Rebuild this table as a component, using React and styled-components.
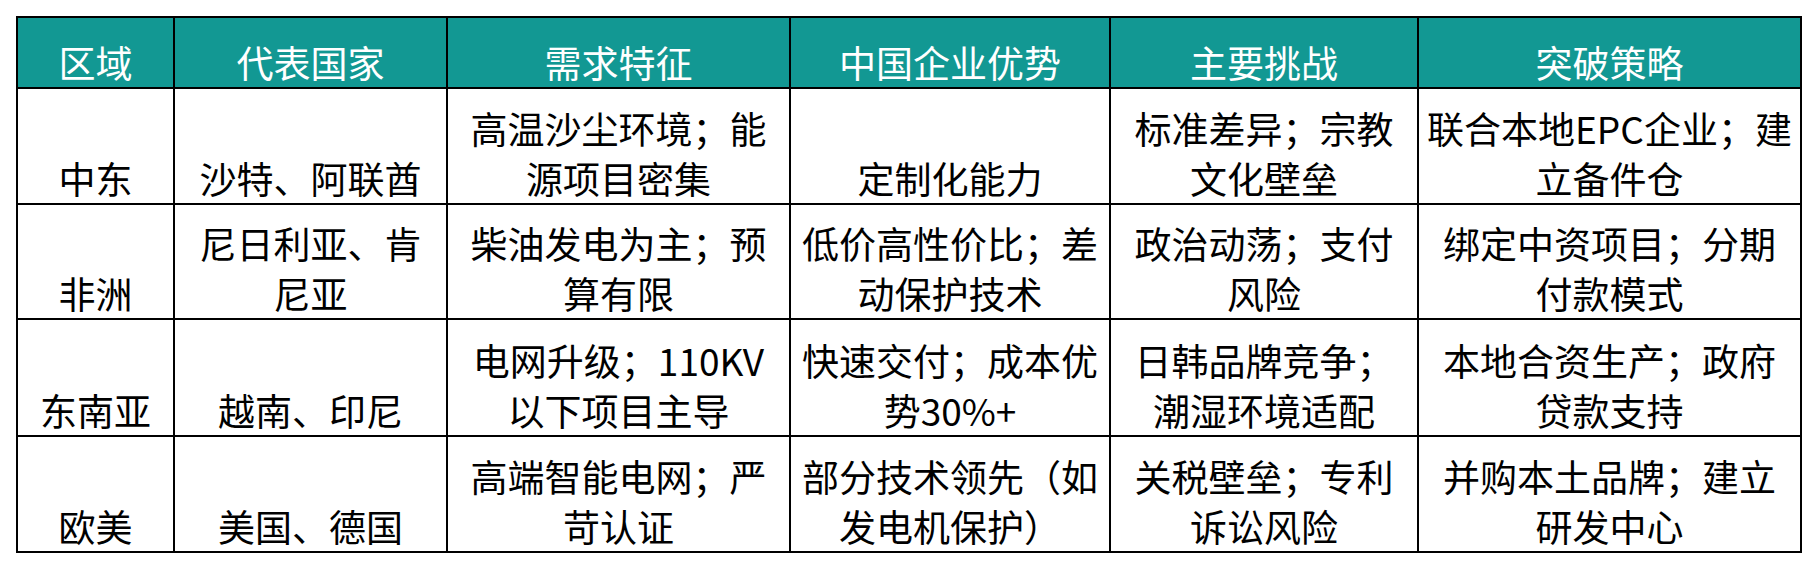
import React from 'react';
import styled, { createGlobalStyle } from 'styled-components';

const GlobalStyle = createGlobalStyle`
  html, body {
    margin: 0;
    padding: 0;
    background: #ffffff;
  }
  body {
    font-family: "Noto Sans CJK SC", "Noto Sans", sans-serif;
  }
`;

const Page = styled.div`
  padding: 16px;
`;

const Grid = styled.div`
  display: grid;
  grid-template-columns: 157px 273px 343px 320px 308px 383px;
  grid-template-rows: 71px 116px 115px 117px 116px;
  width: max-content;
  border-top: 2px solid #000;
  border-left: 2px solid #000;
`;

const Cell = styled.div`
  box-sizing: border-box;
  display: flex;
  flex-direction: column;
  justify-content: flex-end;
  align-items: center;
  border-right: 2px solid #000;
  border-bottom: 2px solid #000;
  background: ${(p) => (p.$head ? '#129893' : '#ffffff')};
  color: ${(p) => (p.$head ? '#ffffff' : '#000000')};
  font-size: 37px;
  line-height: 50px;
  text-align: center;
  overflow: hidden;
`;

const Line = styled.span`
  display: block;
  white-space: nowrap;
`;

const headers = ['区域', '代表国家', '需求特征', '中国企业优势', '主要挑战', '突破策略'];

const rows = [
  [
    ['中东'],
    ['沙特、阿联酋'],
    ['高温沙尘环境；能', '源项目密集'],
    ['定制化能力'],
    ['标准差异；宗教', '文化壁垒'],
    ['联合本地EPC企业；建', '立备件仓'],
  ],
  [
    ['非洲'],
    ['尼日利亚、肯', '尼亚'],
    ['柴油发电为主；预', '算有限'],
    ['低价高性价比；差', '动保护技术'],
    ['政治动荡；支付', '风险'],
    ['绑定中资项目；分期', '付款模式'],
  ],
  [
    ['东南亚'],
    ['越南、印尼'],
    ['电网升级；110KV', '以下项目主导'],
    ['快速交付；成本优', '势30%+'],
    ['日韩品牌竞争；', '潮湿环境适配'],
    ['本地合资生产；政府', '贷款支持'],
  ],
  [
    ['欧美'],
    ['美国、德国'],
    ['高端智能电网；严', '苛认证'],
    ['部分技术领先（如', '发电机保护）'],
    ['关税壁垒；专利', '诉讼风险'],
    ['并购本土品牌；建立', '研发中心'],
  ],
];

export default function App() {
  return (
    <Page>
      <GlobalStyle />
      <Grid>
        {headers.map((h) => (
          <Cell key={h} $head>
            <Line>{h}</Line>
          </Cell>
        ))}
        {rows.map((row, ri) =>
          row.map((lines, ci) => (
            <Cell key={`${ri}-${ci}`}>
              {lines.map((t) => (
                <Line key={t}>{t}</Line>
              ))}
            </Cell>
          ))
        )}
      </Grid>
    </Page>
  );
}
